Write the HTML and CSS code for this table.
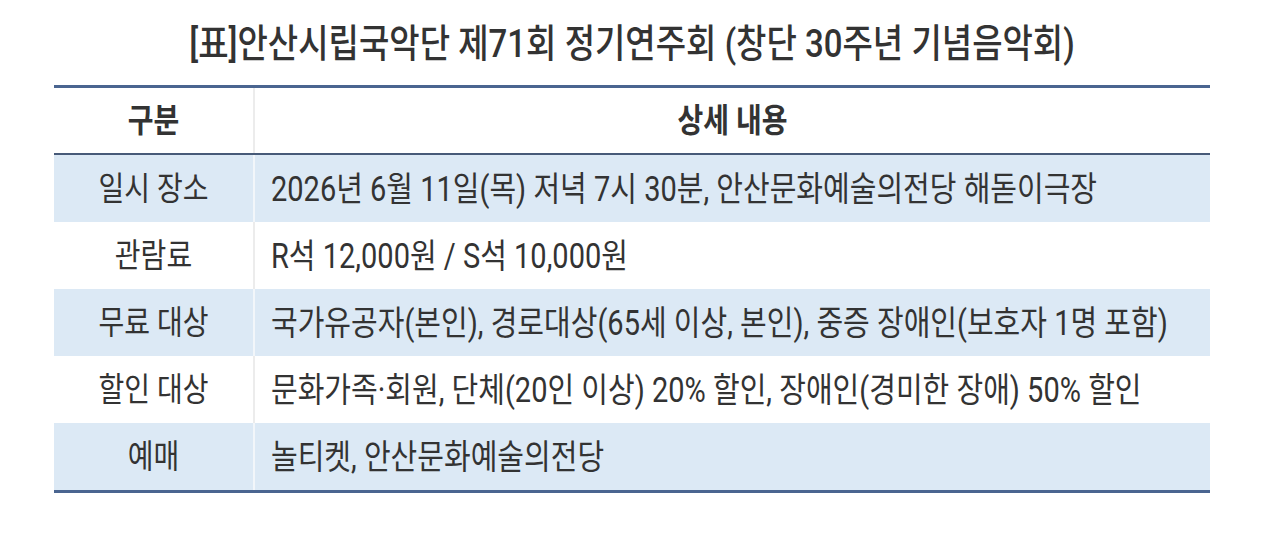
FILE: index.html
```html
<!DOCTYPE html>
<html lang="ko">
<head>
<meta charset="utf-8">
<link rel="stylesheet" href="styles.css">
</head>
<body>
<div class="page">
  <h1 class="title"><span class="t">[표]안산시립국악단 제71회 정기연주회 (창단 30주년 기념음악회)</span></h1>
  <table class="info">
    <thead>
      <tr><th class="c1"><span class="t">구분</span></th><th class="c2"><span class="t">상세 내용</span></th></tr>
    </thead>
    <tbody>
      <tr class="alt"><td class="c1"><span class="t">일시 장소</span></td><td class="c2"><span class="t">2026년 6월 11일(목) 저녁 7시 30분, 안산문화예술의전당 해돋이극장</span></td></tr>
      <tr><td class="c1"><span class="t">관람료</span></td><td class="c2"><span class="t">R석 12,000원 / S석 10,000원</span></td></tr>
      <tr class="alt"><td class="c1"><span class="t">무료 대상</span></td><td class="c2"><span class="t">국가유공자(본인), 경로대상(65세 이상, 본인), 중증 장애인(보호자 1명 포함)</span></td></tr>
      <tr><td class="c1"><span class="t">할인 대상</span></td><td class="c2"><span class="t">문화가족·회원, 단체(20인 이상) 20% 할인, 장애인(경미한 장애) 50% 할인</span></td></tr>
      <tr class="alt"><td class="c1"><span class="t">예매</span></td><td class="c2"><span class="t">놀티켓, 안산문화예술의전당</span></td></tr>
    </tbody>
  </table>
</div>
</body>
</html>
```
FILE: styles.css
```css
html, body {
  margin: 0;
  padding: 0;
  background: #ffffff;
}
body {
  font-family: "Roboto", "Noto Sans CJK KR", "Noto Sans", sans-serif;
  color: #333333;
}
.page {
  width: 1156px;
  margin: 0 0 0 54px;
  padding-top: 22px;
}
.t {
  display: inline-block;
  transform: scaleY(1.18);
  white-space: nowrap;
}
.title {
  margin: 0 0 19px 0;
  text-align: center;
  font-size: 33px;
  font-weight: 500;
  line-height: 44px;
  color: #333333;
}
.info {
  width: 100%;
  border-collapse: collapse;
  border-top: 3px solid #4a6590;
  border-bottom: 3px solid #4a6590;
}
.info th, .info td {
  padding: 0;
  font-size: 28px;
  line-height: 32px;
  vertical-align: middle;
}
.info thead th {
  height: 65px;
  font-weight: 700;
  border-bottom: 2px solid #475a78;
  text-align: center;
}
.info tbody td {
  height: 67px;
}
.info .c1 {
  width: 199px;
  text-align: center;
  border-right: 2px solid #ececec;
}
.info tbody .c2 {
  text-align: left;
  padding-left: 16px;
  font-size: 29px;
}
.info tbody tr.alt {
  background: #dce9f5;
}
.info tbody tr.alt .c1 {
  border-right-color: #f2f6fa;
}
```
